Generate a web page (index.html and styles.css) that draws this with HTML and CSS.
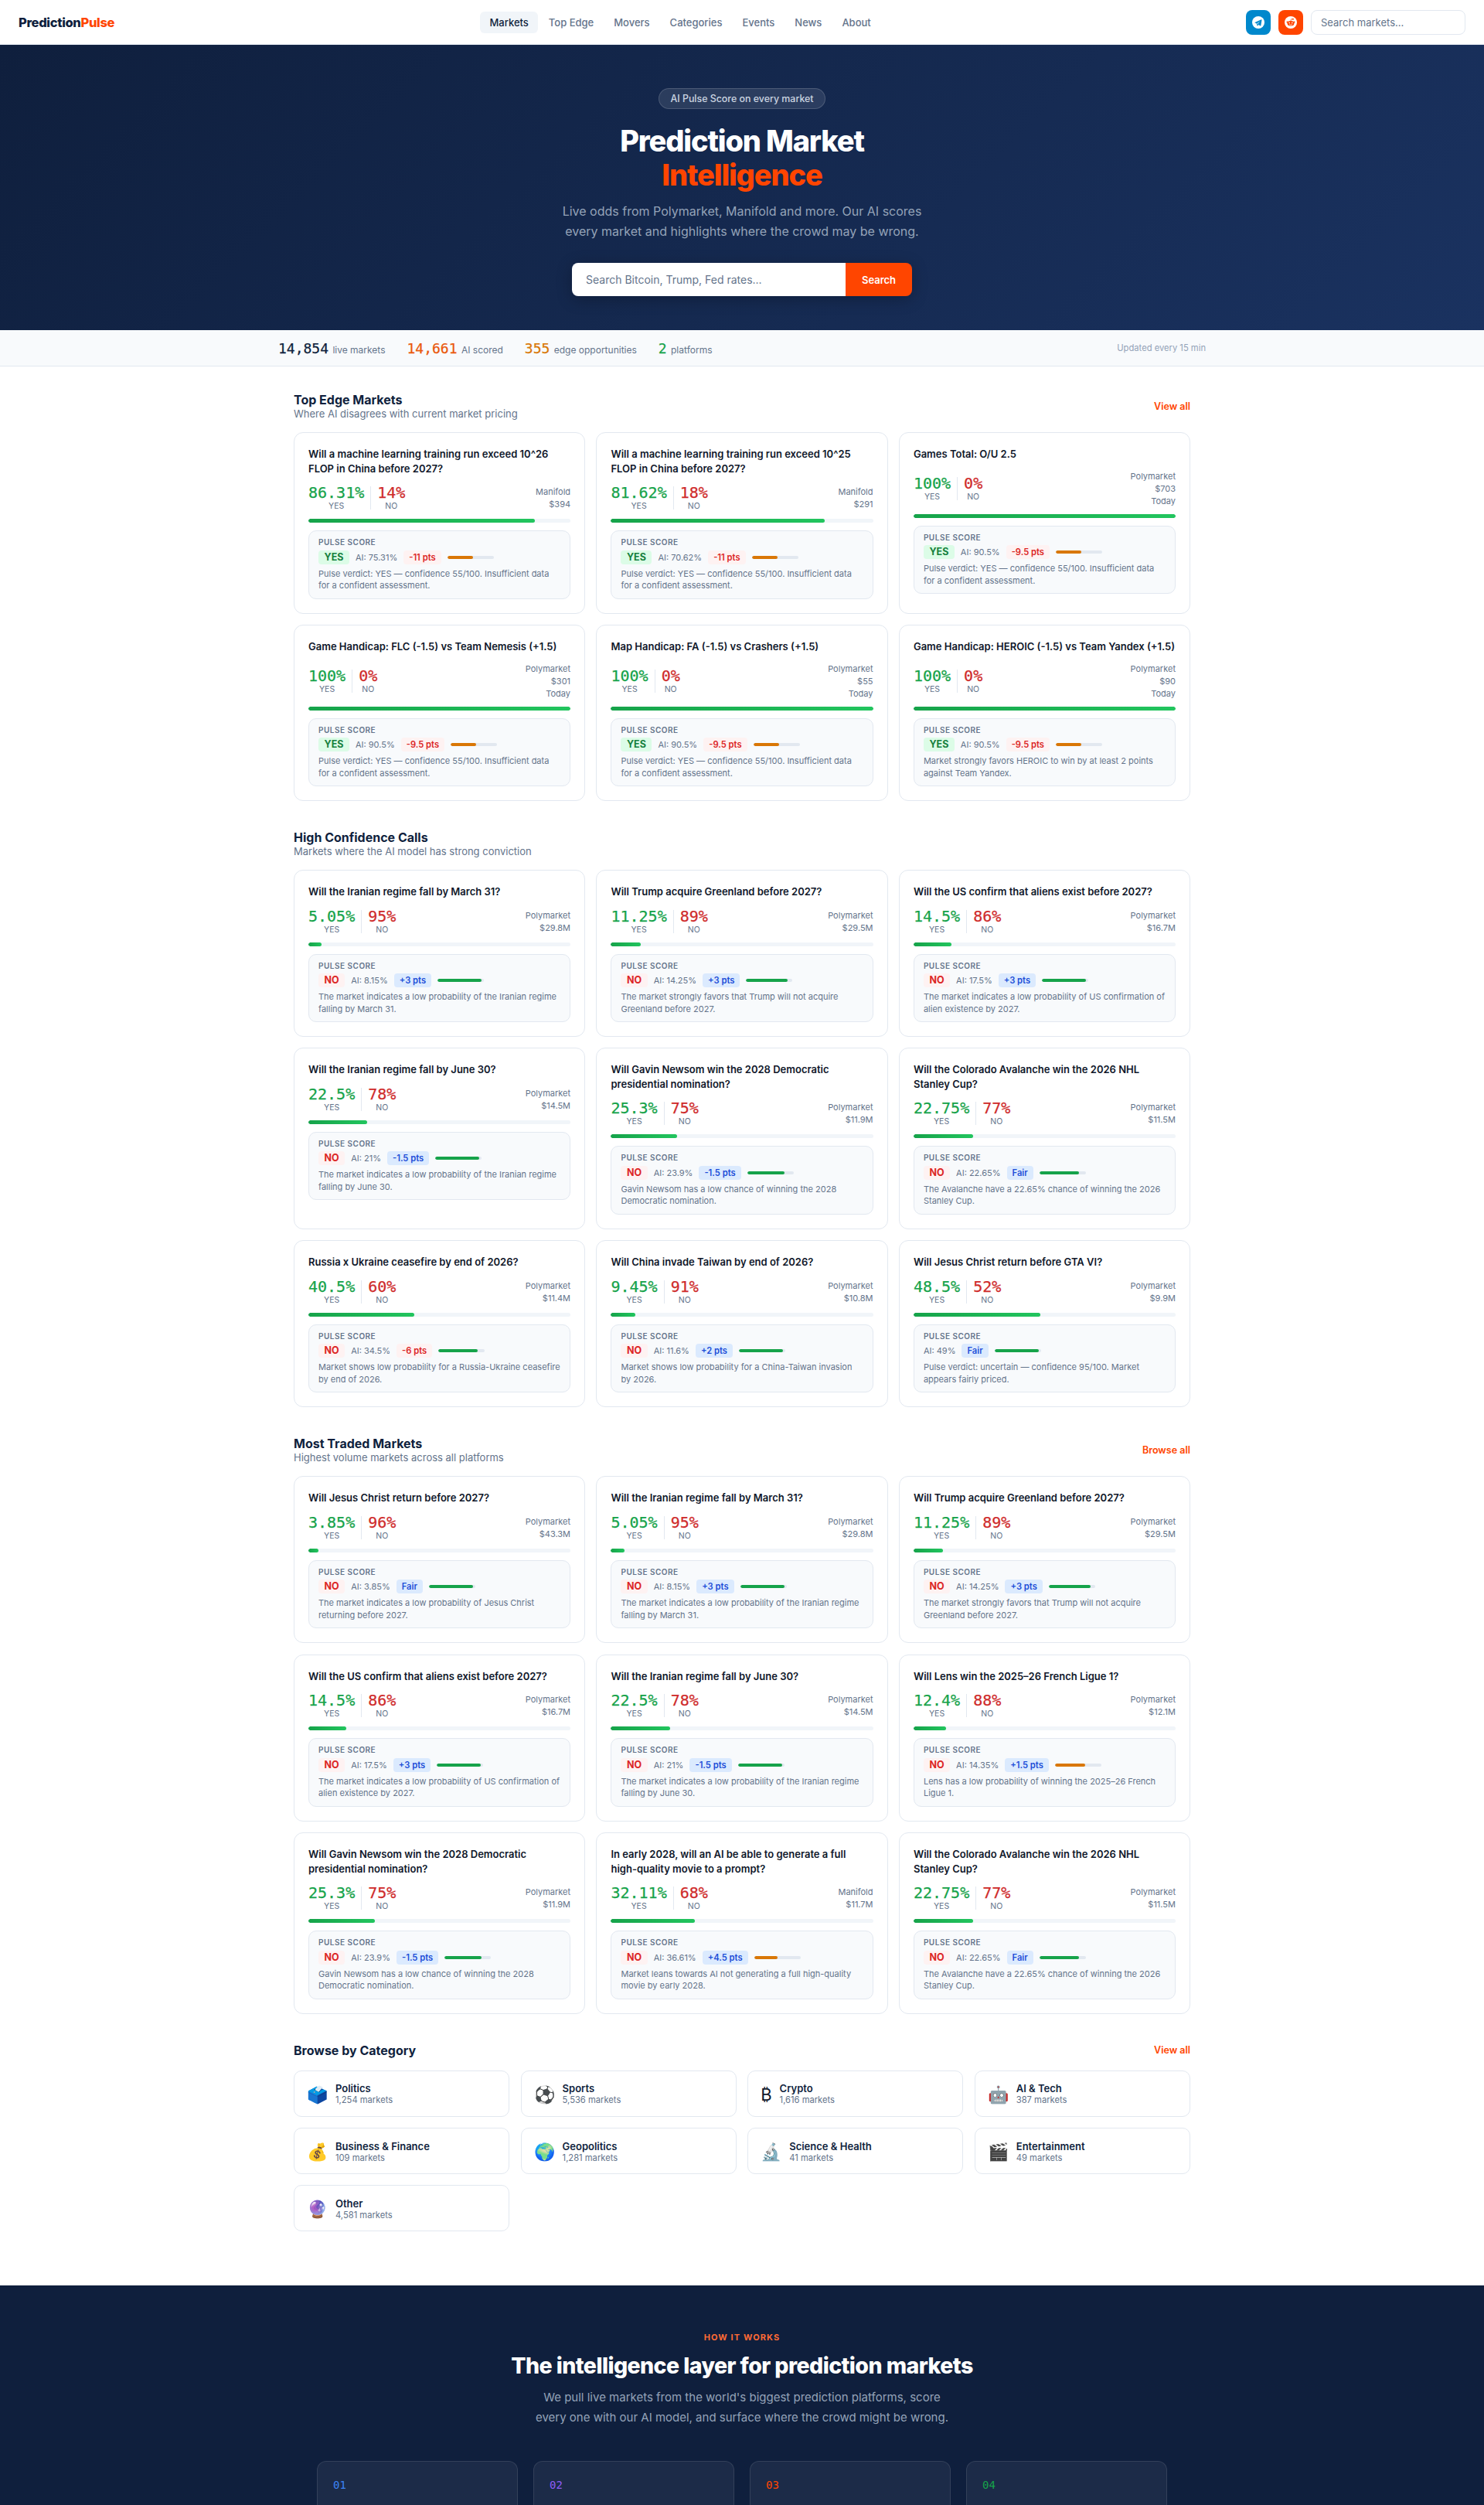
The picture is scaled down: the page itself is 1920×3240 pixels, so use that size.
FILE: index.html
```html
<!DOCTYPE html>
<html lang="en">
<head>
    <meta charset="UTF-8">
    <meta name="viewport" content="width=device-width, initial-scale=1.0">
    <title>PredictionPulse - Prediction Market Intelligence</title>
    <link rel="stylesheet" href="styles.css">
</head>
<body>
    <nav class="navbar">
        <a class="logo" href="#">Prediction<span>Pulse</span></a>
        <div class="nav-links">
            <a class="active" href="#">Markets</a>
            <a href="#">Top Edge</a>
            <a href="#">Movers</a>
            <a href="#">Categories</a>
            <a href="#">Events</a>
            <a href="#">News</a>
            <a href="#">About</a>
        </div>
        <div class="nav-right">
            <a class="social telegram" href="#" aria-label="Telegram">
                <svg viewBox="0 0 16 16" width="16" height="16"><circle cx="8" cy="8" r="8" fill="#fff"/><path d="M11.9 4.2 3.6 7.9c-.3.1-.3.5 0 .6l2 .7 1 3c.1.3.4.3.6.1l1.3-1.3 2.1 1.5c.3.2.6 0 .7-.3l1.2-7.4c.1-.4-.3-.8-.6-.6zM6.5 9.2l3.9-2.9-2.9 3.3-.3 1.6z" fill="#0088cc"/></svg>
            </a>
            <a class="social reddit" href="#" aria-label="Reddit">
                <svg viewBox="0 0 16 16" width="16" height="16"><circle cx="8" cy="8" r="8" fill="#fff"/><ellipse cx="8" cy="9.2" rx="4.4" ry="3.2" fill="#ff4500"/><circle cx="3.6" cy="7.6" r="1.1" fill="#ff4500"/><circle cx="12.4" cy="7.6" r="1.1" fill="#ff4500"/><circle cx="10.9" cy="3.7" r="1" fill="#ff4500"/><path d="M8 6 8.6 3.6l2.2.2" stroke="#ff4500" stroke-width=".7" fill="none"/><circle cx="6.2" cy="8.6" r=".8" fill="#fff"/><circle cx="9.8" cy="8.6" r=".8" fill="#fff"/><path d="M6 10.6c1.2.9 2.8.9 4 0" stroke="#fff" stroke-width=".7" fill="none"/></svg>
            </a>
            <input class="nav-search" type="text" placeholder="Search markets...">
        </div>
    </nav>

    <header class="hero">
        <div class="hero-badge">AI Pulse Score on every market</div>
        <h1>Prediction Market<br><span>Intelligence</span></h1>
        <p>Live odds from Polymarket, Manifold and more. Our AI scores every market and highlights where the crowd may be wrong.</p>
        <form class="hero-search">
            <input type="text" placeholder="Search Bitcoin, Trump, Fed rates...">
            <button type="button">Search</button>
        </form>
    </header>

    <div class="stats-bar">
        <div class="stats-inner">
            <div class="stat"><strong>14,854</strong> live markets</div>
            <div class="stat"><strong class="orange">14,661</strong> AI scored</div>
            <div class="stat"><strong class="amber">355</strong> edge opportunities</div>
            <div class="stat"><strong class="green">2</strong> platforms</div>
            <div class="stats-updated">Updated every 15 min</div>
        </div>
    </div>

    <main class="container">
        <section class="section">
            <div class="section-head">
                <div>
                    <h2>Top Edge Markets</h2>
                    <p>Where AI disagrees with current market pricing</p>
                </div>
                <a href="#">View all</a>
            </div>
            <div class="card-grid">
                <article class="card">
                    <h3>Will a machine learning training run exceed 10^26 FLOP in China before 2027?</h3>
                    <div class="card-top">
                        <div class="odds">
                            <div class="odd yes"><b>86.31%</b><span>YES</span></div>
                            <i></i>
                            <div class="odd no"><b>14%</b><span>NO</span></div>
                        </div>
                        <div class="meta">Manifold<br>$394</div>
                    </div>
                    <div class="bar"><div style="width: 86.31%"></div></div>
                    <div class="pulse">
                        <div class="pulse-label">Pulse Score</div>
                        <div class="pulse-row">
                            <span class="verdict v-yes">YES</span><span class="ai">AI: 75.31%</span><span class="edge e-red">-11 pts</span>
                            <div class="conf"><div class="c-amber" style="width: 55%"></div></div>
                        </div>
                        <p>Pulse verdict: YES — confidence 55/100. Insufficient data for a confident assessment.</p>
                    </div>
                </article>
                <article class="card">
                    <h3>Will a machine learning training run exceed 10^25 FLOP in China before 2027?</h3>
                    <div class="card-top">
                        <div class="odds">
                            <div class="odd yes"><b>81.62%</b><span>YES</span></div>
                            <i></i>
                            <div class="odd no"><b>18%</b><span>NO</span></div>
                        </div>
                        <div class="meta">Manifold<br>$291</div>
                    </div>
                    <div class="bar"><div style="width: 81.62%"></div></div>
                    <div class="pulse">
                        <div class="pulse-label">Pulse Score</div>
                        <div class="pulse-row">
                            <span class="verdict v-yes">YES</span><span class="ai">AI: 70.62%</span><span class="edge e-red">-11 pts</span>
                            <div class="conf"><div class="c-amber" style="width: 55%"></div></div>
                        </div>
                        <p>Pulse verdict: YES — confidence 55/100. Insufficient data for a confident assessment.</p>
                    </div>
                </article>
                <article class="card">
                    <h3>Games Total: O/U 2.5</h3>
                    <div class="card-top">
                        <div class="odds">
                            <div class="odd yes"><b>100%</b><span>YES</span></div>
                            <i></i>
                            <div class="odd no"><b>0%</b><span>NO</span></div>
                        </div>
                        <div class="meta">Polymarket<br>$703<br>Today</div>
                    </div>
                    <div class="bar"><div style="width: 100%"></div></div>
                    <div class="pulse">
                        <div class="pulse-label">Pulse Score</div>
                        <div class="pulse-row">
                            <span class="verdict v-yes">YES</span><span class="ai">AI: 90.5%</span><span class="edge e-red">-9.5 pts</span>
                            <div class="conf"><div class="c-amber" style="width: 55%"></div></div>
                        </div>
                        <p>Pulse verdict: YES — confidence 55/100. Insufficient data for a confident assessment.</p>
                    </div>
                </article>
                <article class="card">
                    <h3>Game Handicap: FLC (-1.5) vs Team Nemesis (+1.5)</h3>
                    <div class="card-top">
                        <div class="odds">
                            <div class="odd yes"><b>100%</b><span>YES</span></div>
                            <i></i>
                            <div class="odd no"><b>0%</b><span>NO</span></div>
                        </div>
                        <div class="meta">Polymarket<br>$301<br>Today</div>
                    </div>
                    <div class="bar"><div style="width: 100%"></div></div>
                    <div class="pulse">
                        <div class="pulse-label">Pulse Score</div>
                        <div class="pulse-row">
                            <span class="verdict v-yes">YES</span><span class="ai">AI: 90.5%</span><span class="edge e-red">-9.5 pts</span>
                            <div class="conf"><div class="c-amber" style="width: 55%"></div></div>
                        </div>
                        <p>Pulse verdict: YES — confidence 55/100. Insufficient data for a confident assessment.</p>
                    </div>
                </article>
                <article class="card">
                    <h3>Map Handicap: FA (-1.5) vs Crashers (+1.5)</h3>
                    <div class="card-top">
                        <div class="odds">
                            <div class="odd yes"><b>100%</b><span>YES</span></div>
                            <i></i>
                            <div class="odd no"><b>0%</b><span>NO</span></div>
                        </div>
                        <div class="meta">Polymarket<br>$55<br>Today</div>
                    </div>
                    <div class="bar"><div style="width: 100%"></div></div>
                    <div class="pulse">
                        <div class="pulse-label">Pulse Score</div>
                        <div class="pulse-row">
                            <span class="verdict v-yes">YES</span><span class="ai">AI: 90.5%</span><span class="edge e-red">-9.5 pts</span>
                            <div class="conf"><div class="c-amber" style="width: 55%"></div></div>
                        </div>
                        <p>Pulse verdict: YES — confidence 55/100. Insufficient data for a confident assessment.</p>
                    </div>
                </article>
                <article class="card">
                    <h3>Game Handicap: HEROIC (-1.5) vs Team Yandex (+1.5)</h3>
                    <div class="card-top">
                        <div class="odds">
                            <div class="odd yes"><b>100%</b><span>YES</span></div>
                            <i></i>
                            <div class="odd no"><b>0%</b><span>NO</span></div>
                        </div>
                        <div class="meta">Polymarket<br>$90<br>Today</div>
                    </div>
                    <div class="bar"><div style="width: 100%"></div></div>
                    <div class="pulse">
                        <div class="pulse-label">Pulse Score</div>
                        <div class="pulse-row">
                            <span class="verdict v-yes">YES</span><span class="ai">AI: 90.5%</span><span class="edge e-red">-9.5 pts</span>
                            <div class="conf"><div class="c-amber" style="width: 55%"></div></div>
                        </div>
                        <p>Market strongly favors HEROIC to win by at least 2 points against Team Yandex.</p>
                    </div>
                </article>
            </div>
        </section>

        <section class="section">
            <div class="section-head">
                <div>
                    <h2>High Confidence Calls</h2>
                    <p>Markets where the AI model has strong conviction</p>
                </div>
            </div>
            <div class="card-grid">
                <article class="card">
                    <h3>Will the Iranian regime fall by March 31?</h3>
                    <div class="card-top">
                        <div class="odds">
                            <div class="odd yes"><b>5.05%</b><span>YES</span></div>
                            <i></i>
                            <div class="odd no"><b>95%</b><span>NO</span></div>
                        </div>
                        <div class="meta">Polymarket<br>$29.8M</div>
                    </div>
                    <div class="bar"><div style="width: 5.05%"></div></div>
                    <div class="pulse">
                        <div class="pulse-label">Pulse Score</div>
                        <div class="pulse-row">
                            <span class="verdict v-no">NO</span><span class="ai">AI: 8.15%</span><span class="edge e-blue">+3 pts</span>
                            <div class="conf"><div class="c-green" style="width: 95%"></div></div>
                        </div>
                        <p>The market indicates a low probability of the Iranian regime falling by March 31.</p>
                    </div>
                </article>
                <article class="card">
                    <h3>Will Trump acquire Greenland before 2027?</h3>
                    <div class="card-top">
                        <div class="odds">
                            <div class="odd yes"><b>11.25%</b><span>YES</span></div>
                            <i></i>
                            <div class="odd no"><b>89%</b><span>NO</span></div>
                        </div>
                        <div class="meta">Polymarket<br>$29.5M</div>
                    </div>
                    <div class="bar"><div style="width: 11.25%"></div></div>
                    <div class="pulse">
                        <div class="pulse-label">Pulse Score</div>
                        <div class="pulse-row">
                            <span class="verdict v-no">NO</span><span class="ai">AI: 14.25%</span><span class="edge e-blue">+3 pts</span>
                            <div class="conf"><div class="c-green" style="width: 90%"></div></div>
                        </div>
                        <p>The market strongly favors that Trump will not acquire Greenland before 2027.</p>
                    </div>
                </article>
                <article class="card">
                    <h3>Will the US confirm that aliens exist before 2027?</h3>
                    <div class="card-top">
                        <div class="odds">
                            <div class="odd yes"><b>14.5%</b><span>YES</span></div>
                            <i></i>
                            <div class="odd no"><b>86%</b><span>NO</span></div>
                        </div>
                        <div class="meta">Polymarket<br>$16.7M</div>
                    </div>
                    <div class="bar"><div style="width: 14.5%"></div></div>
                    <div class="pulse">
                        <div class="pulse-label">Pulse Score</div>
                        <div class="pulse-row">
                            <span class="verdict v-no">NO</span><span class="ai">AI: 17.5%</span><span class="edge e-blue">+3 pts</span>
                            <div class="conf"><div class="c-green" style="width: 95%"></div></div>
                        </div>
                        <p>The market indicates a low probability of US confirmation of alien existence by 2027.</p>
                    </div>
                </article>
                <article class="card">
                    <h3>Will the Iranian regime fall by June 30?</h3>
                    <div class="card-top">
                        <div class="odds">
                            <div class="odd yes"><b>22.5%</b><span>YES</span></div>
                            <i></i>
                            <div class="odd no"><b>78%</b><span>NO</span></div>
                        </div>
                        <div class="meta">Polymarket<br>$14.5M</div>
                    </div>
                    <div class="bar"><div style="width: 22.5%"></div></div>
                    <div class="pulse">
                        <div class="pulse-label">Pulse Score</div>
                        <div class="pulse-row">
                            <span class="verdict v-no">NO</span><span class="ai">AI: 21%</span><span class="edge e-blue">-1.5 pts</span>
                            <div class="conf"><div class="c-green" style="width: 95%"></div></div>
                        </div>
                        <p>The market indicates a low probability of the Iranian regime falling by June 30.</p>
                    </div>
                </article>
                <article class="card">
                    <h3>Will Gavin Newsom win the 2028 Democratic presidential nomination?</h3>
                    <div class="card-top">
                        <div class="odds">
                            <div class="odd yes"><b>25.3%</b><span>YES</span></div>
                            <i></i>
                            <div class="odd no"><b>75%</b><span>NO</span></div>
                        </div>
                        <div class="meta">Polymarket<br>$11.9M</div>
                    </div>
                    <div class="bar"><div style="width: 25.3%"></div></div>
                    <div class="pulse">
                        <div class="pulse-label">Pulse Score</div>
                        <div class="pulse-row">
                            <span class="verdict v-no">NO</span><span class="ai">AI: 23.9%</span><span class="edge e-blue">-1.5 pts</span>
                            <div class="conf"><div class="c-green" style="width: 80%"></div></div>
                        </div>
                        <p>Gavin Newsom has a low chance of winning the 2028 Democratic nomination.</p>
                    </div>
                </article>
                <article class="card">
                    <h3>Will the Colorado Avalanche win the 2026 NHL Stanley Cup?</h3>
                    <div class="card-top">
                        <div class="odds">
                            <div class="odd yes"><b>22.75%</b><span>YES</span></div>
                            <i></i>
                            <div class="odd no"><b>77%</b><span>NO</span></div>
                        </div>
                        <div class="meta">Polymarket<br>$11.5M</div>
                    </div>
                    <div class="bar"><div style="width: 22.75%"></div></div>
                    <div class="pulse">
                        <div class="pulse-label">Pulse Score</div>
                        <div class="pulse-row">
                            <span class="verdict v-no">NO</span><span class="ai">AI: 22.65%</span><span class="edge e-blue">Fair</span>
                            <div class="conf"><div class="c-green" style="width: 85%"></div></div>
                        </div>
                        <p>The Avalanche have a 22.65% chance of winning the 2026 Stanley Cup.</p>
                    </div>
                </article>
                <article class="card">
                    <h3>Russia x Ukraine ceasefire by end of 2026?</h3>
                    <div class="card-top">
                        <div class="odds">
                            <div class="odd yes"><b>40.5%</b><span>YES</span></div>
                            <i></i>
                            <div class="odd no"><b>60%</b><span>NO</span></div>
                        </div>
                        <div class="meta">Polymarket<br>$11.4M</div>
                    </div>
                    <div class="bar"><div style="width: 40.5%"></div></div>
                    <div class="pulse">
                        <div class="pulse-label">Pulse Score</div>
                        <div class="pulse-row">
                            <span class="verdict v-no">NO</span><span class="ai">AI: 34.5%</span><span class="edge e-red">-6 pts</span>
                            <div class="conf"><div class="c-green" style="width: 85%"></div></div>
                        </div>
                        <p>Market shows low probability for a Russia-Ukraine ceasefire by end of 2026.</p>
                    </div>
                </article>
                <article class="card">
                    <h3>Will China invade Taiwan by end of 2026?</h3>
                    <div class="card-top">
                        <div class="odds">
                            <div class="odd yes"><b>9.45%</b><span>YES</span></div>
                            <i></i>
                            <div class="odd no"><b>91%</b><span>NO</span></div>
                        </div>
                        <div class="meta">Polymarket<br>$10.8M</div>
                    </div>
                    <div class="bar"><div style="width: 9.45%"></div></div>
                    <div class="pulse">
                        <div class="pulse-label">Pulse Score</div>
                        <div class="pulse-row">
                            <span class="verdict v-no">NO</span><span class="ai">AI: 11.6%</span><span class="edge e-blue">+2 pts</span>
                            <div class="conf"><div class="c-green" style="width: 95%"></div></div>
                        </div>
                        <p>Market shows low probability for a China-Taiwan invasion by 2026.</p>
                    </div>
                </article>
                <article class="card">
                    <h3>Will Jesus Christ return before GTA VI?</h3>
                    <div class="card-top">
                        <div class="odds">
                            <div class="odd yes"><b>48.5%</b><span>YES</span></div>
                            <i></i>
                            <div class="odd no"><b>52%</b><span>NO</span></div>
                        </div>
                        <div class="meta">Polymarket<br>$9.9M</div>
                    </div>
                    <div class="bar"><div style="width: 48.5%"></div></div>
                    <div class="pulse">
                        <div class="pulse-label">Pulse Score</div>
                        <div class="pulse-row">
                            <span class="ai">AI: 49%</span><span class="edge e-blue">Fair</span>
                            <div class="conf"><div class="c-green" style="width: 95%"></div></div>
                        </div>
                        <p>Pulse verdict: uncertain — confidence 95/100. Market appears fairly priced.</p>
                    </div>
                </article>
            </div>
        </section>

        <section class="section">
            <div class="section-head">
                <div>
                    <h2>Most Traded Markets</h2>
                    <p>Highest volume markets across all platforms</p>
                </div>
                <a href="#">Browse all</a>
            </div>
            <div class="card-grid">
                <article class="card">
                    <h3>Will Jesus Christ return before 2027?</h3>
                    <div class="card-top">
                        <div class="odds">
                            <div class="odd yes"><b>3.85%</b><span>YES</span></div>
                            <i></i>
                            <div class="odd no"><b>96%</b><span>NO</span></div>
                        </div>
                        <div class="meta">Polymarket<br>$43.3M</div>
                    </div>
                    <div class="bar"><div style="width: 3.85%"></div></div>
                    <div class="pulse">
                        <div class="pulse-label">Pulse Score</div>
                        <div class="pulse-row">
                            <span class="verdict v-no">NO</span><span class="ai">AI: 3.85%</span><span class="edge e-blue">Fair</span>
                            <div class="conf"><div class="c-green" style="width: 95%"></div></div>
                        </div>
                        <p>The market indicates a low probability of Jesus Christ returning before 2027.</p>
                    </div>
                </article>
                <article class="card">
                    <h3>Will the Iranian regime fall by March 31?</h3>
                    <div class="card-top">
                        <div class="odds">
                            <div class="odd yes"><b>5.05%</b><span>YES</span></div>
                            <i></i>
                            <div class="odd no"><b>95%</b><span>NO</span></div>
                        </div>
                        <div class="meta">Polymarket<br>$29.8M</div>
                    </div>
                    <div class="bar"><div style="width: 5.05%"></div></div>
                    <div class="pulse">
                        <div class="pulse-label">Pulse Score</div>
                        <div class="pulse-row">
                            <span class="verdict v-no">NO</span><span class="ai">AI: 8.15%</span><span class="edge e-blue">+3 pts</span>
                            <div class="conf"><div class="c-green" style="width: 95%"></div></div>
                        </div>
                        <p>The market indicates a low probability of the Iranian regime falling by March 31.</p>
                    </div>
                </article>
                <article class="card">
                    <h3>Will Trump acquire Greenland before 2027?</h3>
                    <div class="card-top">
                        <div class="odds">
                            <div class="odd yes"><b>11.25%</b><span>YES</span></div>
                            <i></i>
                            <div class="odd no"><b>89%</b><span>NO</span></div>
                        </div>
                        <div class="meta">Polymarket<br>$29.5M</div>
                    </div>
                    <div class="bar"><div style="width: 11.25%"></div></div>
                    <div class="pulse">
                        <div class="pulse-label">Pulse Score</div>
                        <div class="pulse-row">
                            <span class="verdict v-no">NO</span><span class="ai">AI: 14.25%</span><span class="edge e-blue">+3 pts</span>
                            <div class="conf"><div class="c-green" style="width: 90%"></div></div>
                        </div>
                        <p>The market strongly favors that Trump will not acquire Greenland before 2027.</p>
                    </div>
                </article>
                <article class="card">
                    <h3>Will the US confirm that aliens exist before 2027?</h3>
                    <div class="card-top">
                        <div class="odds">
                            <div class="odd yes"><b>14.5%</b><span>YES</span></div>
                            <i></i>
                            <div class="odd no"><b>86%</b><span>NO</span></div>
                        </div>
                        <div class="meta">Polymarket<br>$16.7M</div>
                    </div>
                    <div class="bar"><div style="width: 14.5%"></div></div>
                    <div class="pulse">
                        <div class="pulse-label">Pulse Score</div>
                        <div class="pulse-row">
                            <span class="verdict v-no">NO</span><span class="ai">AI: 17.5%</span><span class="edge e-blue">+3 pts</span>
                            <div class="conf"><div class="c-green" style="width: 95%"></div></div>
                        </div>
                        <p>The market indicates a low probability of US confirmation of alien existence by 2027.</p>
                    </div>
                </article>
                <article class="card">
                    <h3>Will the Iranian regime fall by June 30?</h3>
                    <div class="card-top">
                        <div class="odds">
                            <div class="odd yes"><b>22.5%</b><span>YES</span></div>
                            <i></i>
                            <div class="odd no"><b>78%</b><span>NO</span></div>
                        </div>
                        <div class="meta">Polymarket<br>$14.5M</div>
                    </div>
                    <div class="bar"><div style="width: 22.5%"></div></div>
                    <div class="pulse">
                        <div class="pulse-label">Pulse Score</div>
                        <div class="pulse-row">
                            <span class="verdict v-no">NO</span><span class="ai">AI: 21%</span><span class="edge e-blue">-1.5 pts</span>
                            <div class="conf"><div class="c-green" style="width: 95%"></div></div>
                        </div>
                        <p>The market indicates a low probability of the Iranian regime falling by June 30.</p>
                    </div>
                </article>
                <article class="card">
                    <h3>Will Lens win the 2025–26 French Ligue 1?</h3>
                    <div class="card-top">
                        <div class="odds">
                            <div class="odd yes"><b>12.4%</b><span>YES</span></div>
                            <i></i>
                            <div class="odd no"><b>88%</b><span>NO</span></div>
                        </div>
                        <div class="meta">Polymarket<br>$12.1M</div>
                    </div>
                    <div class="bar"><div style="width: 12.4%"></div></div>
                    <div class="pulse">
                        <div class="pulse-label">Pulse Score</div>
                        <div class="pulse-row">
                            <span class="verdict v-no">NO</span><span class="ai">AI: 14.35%</span><span class="edge e-blue">+1.5 pts</span>
                            <div class="conf"><div class="c-amber" style="width: 65%"></div></div>
                        </div>
                        <p>Lens has a low probability of winning the 2025–26 French Ligue 1.</p>
                    </div>
                </article>
                <article class="card">
                    <h3>Will Gavin Newsom win the 2028 Democratic presidential nomination?</h3>
                    <div class="card-top">
                        <div class="odds">
                            <div class="odd yes"><b>25.3%</b><span>YES</span></div>
                            <i></i>
                            <div class="odd no"><b>75%</b><span>NO</span></div>
                        </div>
                        <div class="meta">Polymarket<br>$11.9M</div>
                    </div>
                    <div class="bar"><div style="width: 25.3%"></div></div>
                    <div class="pulse">
                        <div class="pulse-label">Pulse Score</div>
                        <div class="pulse-row">
                            <span class="verdict v-no">NO</span><span class="ai">AI: 23.9%</span><span class="edge e-blue">-1.5 pts</span>
                            <div class="conf"><div class="c-green" style="width: 80%"></div></div>
                        </div>
                        <p>Gavin Newsom has a low chance of winning the 2028 Democratic nomination.</p>
                    </div>
                </article>
                <article class="card">
                    <h3>In early 2028, will an AI be able to generate a full high-quality movie to a prompt?</h3>
                    <div class="card-top">
                        <div class="odds">
                            <div class="odd yes"><b>32.11%</b><span>YES</span></div>
                            <i></i>
                            <div class="odd no"><b>68%</b><span>NO</span></div>
                        </div>
                        <div class="meta">Manifold<br>$11.7M</div>
                    </div>
                    <div class="bar"><div style="width: 32.11%"></div></div>
                    <div class="pulse">
                        <div class="pulse-label">Pulse Score</div>
                        <div class="pulse-row">
                            <span class="verdict v-no">NO</span><span class="ai">AI: 36.61%</span><span class="edge e-blue">+4.5 pts</span>
                            <div class="conf"><div class="c-amber" style="width: 50%"></div></div>
                        </div>
                        <p>Market leans towards AI not generating a full high-quality movie by early 2028.</p>
                    </div>
                </article>
                <article class="card">
                    <h3>Will the Colorado Avalanche win the 2026 NHL Stanley Cup?</h3>
                    <div class="card-top">
                        <div class="odds">
                            <div class="odd yes"><b>22.75%</b><span>YES</span></div>
                            <i></i>
                            <div class="odd no"><b>77%</b><span>NO</span></div>
                        </div>
                        <div class="meta">Polymarket<br>$11.5M</div>
                    </div>
                    <div class="bar"><div style="width: 22.75%"></div></div>
                    <div class="pulse">
                        <div class="pulse-label">Pulse Score</div>
                        <div class="pulse-row">
                            <span class="verdict v-no">NO</span><span class="ai">AI: 22.65%</span><span class="edge e-blue">Fair</span>
                            <div class="conf"><div class="c-green" style="width: 85%"></div></div>
                        </div>
                        <p>The Avalanche have a 22.65% chance of winning the 2026 Stanley Cup.</p>
                    </div>
                </article>
            </div>
        </section>

        <section class="section">
            <div class="section-head">
                <div>
                    <h2>Browse by Category</h2>
                </div>
                <a href="#">View all</a>
            </div>
            <div class="cat-grid">
                <a class="cat" href="#"><span class="cat-icon">🗳️</span><div><h4>Politics</h4><small>1,254 markets</small></div></a>
                <a class="cat" href="#"><span class="cat-icon">⚽</span><div><h4>Sports</h4><small>5,536 markets</small></div></a>
                <a class="cat" href="#"><span class="cat-icon">₿</span><div><h4>Crypto</h4><small>1,616 markets</small></div></a>
                <a class="cat" href="#"><span class="cat-icon">🤖</span><div><h4>AI &amp; Tech</h4><small>387 markets</small></div></a>
                <a class="cat" href="#"><span class="cat-icon">💰</span><div><h4>Business &amp; Finance</h4><small>109 markets</small></div></a>
                <a class="cat" href="#"><span class="cat-icon">🌍</span><div><h4>Geopolitics</h4><small>1,281 markets</small></div></a>
                <a class="cat" href="#"><span class="cat-icon">🔬</span><div><h4>Science &amp; Health</h4><small>41 markets</small></div></a>
                <a class="cat" href="#"><span class="cat-icon">🎬</span><div><h4>Entertainment</h4><small>49 markets</small></div></a>
                <a class="cat" href="#"><span class="cat-icon">🔮</span><div><h4>Other</h4><small>4,581 markets</small></div></a>
            </div>
        </section>
    </main>

    <section class="how">
        <div class="how-eyebrow">How it works</div>
        <h2>The intelligence layer for prediction markets</h2>
        <p class="how-sub">We pull live markets from the world's biggest prediction platforms, score every one with our AI model, and surface where the crowd might be wrong.</p>
        <div class="how-steps">
            <div class="step"><span class="n1">01</span><h4>Aggregate</h4><p>Live markets from every major platform in one place.</p></div>
            <div class="step"><span class="n2">02</span><h4>Analyze</h4><p>Our AI model gives each market its own probability.</p></div>
            <div class="step"><span class="n3">03</span><h4>Find the edge</h4><p>We compare the AI score with the market price.</p></div>
            <div class="step"><span class="n4">04</span><h4>Act on it</h4><p>See where the crowd may be wrong and decide.</p></div>
        </div>
    </section>
</body>
</html>
```

FILE: styles.css
```css
* {
    margin: 0;
    padding: 0;
    box-sizing: border-box;
}

body {
    font-family: Inter, 'Noto Sans', sans-serif;
    background: #fff;
    color: #0f172a;
}

a {
    text-decoration: none;
    color: inherit;
}

.navbar {
    display: flex;
    align-items: center;
    justify-content: space-between;
    height: 58px;
    padding: 0 24px;
    background: #fff;
    border-bottom: 1px solid #e2e8f0;
}

.logo {
    font-size: 16.5px;
    font-weight: 800;
    letter-spacing: -0.02em;
    color: #0f1f3d;
}

.logo span {
    color: #ff4500;
}

.nav-links {
    display: flex;
    gap: 2px;
}

.nav-links a {
    padding: 6px 12px;
    border-radius: 6px;
    font-size: 13px;
    line-height: 16px;
    font-weight: 500;
    color: #64748b;
}

.nav-links a.active {
    background: #f1f5f9;
    color: #0f1f3d;
}

.nav-right {
    display: flex;
    align-items: center;
    gap: 10px;
}

.social {
    display: flex;
    align-items: center;
    justify-content: center;
    width: 32px;
    height: 32px;
    border-radius: 8px;
}

.telegram {
    background: #0088cc;
}

.reddit {
    background: #ff4500;
}

.nav-search {
    width: 200px;
    height: 32px;
    padding: 0 12px;
    border: 1px solid #e2e8f0;
    border-radius: 8px;
    font: 13px Inter, sans-serif;
}

.nav-search::placeholder {
    color: #64748b;
}

.hero {
    padding: 56px 20px 44px;
    text-align: center;
    background: linear-gradient(135deg, #0f1f3d 0%, #1a3260 100%);
    color: #fff;
}

.hero-badge {
    display: inline-block;
    height: 27px;
    padding: 0 14px;
    margin-bottom: 20px;
    border: 1px solid rgba(255,255,255,0.15);
    border-radius: 20px;
    background: rgba(255,255,255,0.1);
    font-size: 12.4px;
    line-height: 25px;
    font-weight: 500;
    color: #cbd5e1;
}

.hero h1 {
    font-size: 38px;
    line-height: 43.5px;
    font-weight: 800;
    letter-spacing: -0.03em;
    margin-bottom: 13px;
}

.hero h1 span {
    color: #ff4500;
}

.hero p {
    max-width: 500px;
    margin: 0 auto 28px;
    font-size: 16px;
    line-height: 25.6px;
    color: #94a3b8;
}

.hero-search {
    display: flex;
    width: 440px;
    height: 43px;
    margin: 0 auto;
    border-radius: 8px;
    overflow: hidden;
    box-shadow: 0 4px 20px rgba(0,0,0,0.25);
}

.hero-search input {
    flex: 1;
    min-width: 0;
    padding: 0 18px;
    border: none;
    font: 14px Inter, sans-serif;
}

.hero-search input::placeholder {
    color: #64748b;
}

.hero-search button {
    width: 86px;
    border: none;
    background: #ff4500;
    color: #fff;
    font: 600 13px Inter, sans-serif;
}

.stats-bar {
    height: 47px;
    background: #f8fafc;
    border-bottom: 1px solid #e2e8f0;
}

.stats-inner {
    display: flex;
    align-items: center;
    gap: 28px;
    max-width: 1200px;
    height: 100%;
    margin: 0 auto;
}

.stat {
    font-size: 12px;
    color: #64748b;
}

.stat strong {
    margin-right: 2px;
    font-family: 'DejaVu Sans Mono', monospace;
    font-size: 18px;
    font-weight: 500;
    -webkit-text-stroke: 0.25px currentColor;
    color: #0f1f3d;
}

.stat strong.orange { color: #ea580c; }
.stat strong.amber { color: #d97706; }
.stat strong.green { color: #16a34a; }

.stats-updated {
    margin-left: auto;
    font-size: 11.2px;
    color: #94a3b8;
}

.container {
    max-width: 1200px;
    margin: 0 auto;
    padding: 33px 20px 70px;
}

.section {
    margin-bottom: 37px;
}

.section:last-child {
    margin-bottom: 0;
}

.section-head {
    display: flex;
    align-items: center;
    justify-content: space-between;
    margin-bottom: 16px;
}

.section-head h2 {
    font-size: 16px;
    line-height: 20px;
    font-weight: 700;
    color: #0f1f3d;
}

.section-head p {
    font-size: 13px;
    line-height: 16px;
    color: #64748b;
}

.section-head a {
    font-size: 12.5px;
    font-weight: 600;
    color: #ff4500;
}

.card-grid {
    display: grid;
    grid-template-columns: repeat(3, 1fr);
    gap: 14.4px;
}

.card {
    display: flex;
    flex-direction: column;
    padding: 18px;
    border: 1px solid #e2e8f0;
    border-radius: 12px;
    background: #fff;
}

.card h3 {
    font-size: 13px;
    line-height: 18.5px;
    font-weight: 600;
    color: #0f172a;
    margin-bottom: 11px;
}

.card-top {
    display: flex;
    align-items: center;
    justify-content: space-between;
    margin-bottom: 9px;
}

.odds {
    display: flex;
    align-items: center;
    gap: 8px;
}

.odds i {
    width: 1px;
    height: 30px;
    background: #e2e8f0;
}

.odd {
    text-align: center;
}

.odd b {
    display: block;
    font-family: 'DejaVu Sans Mono', monospace;
    font-size: 20px;
    line-height: 22px;
    font-weight: 500;
    -webkit-text-stroke: 0.25px currentColor;
}

.odd span {
    display: block;
    font-size: 10.5px;
    line-height: 14px;
    color: #64748b;
}

.odd.yes b { color: #16a34a; }
.odd.no b { color: #cf2b2b; }

.meta {
    text-align: right;
    font-size: 11px;
    line-height: 16px;
    color: #64748b;
}

.bar {
    height: 5px;
    margin-bottom: 10px;
    border-radius: 3px;
    background: #f1f5f9;
    overflow: hidden;
}

.bar div {
    height: 100%;
    border-radius: 3px;
    background: linear-gradient(90deg, #16a34a, #22c55e);
}

.pulse {
    padding: 8px 12px;
    border: 1px solid #e2e8f0;
    border-radius: 10px;
    background: #f8fafc;
}

.pulse-label {
    font-size: 10px;
    line-height: 13px;
    font-weight: 600;
    letter-spacing: 0.05em;
    text-transform: uppercase;
    color: #64748b;
    margin-bottom: 3.5px;
}

.pulse-row {
    display: flex;
    align-items: center;
    gap: 8px;
    height: 18px;
    margin-bottom: 5px;
}

.verdict {
    padding: 0 7.5px;
    border-radius: 4px;
    font-size: 12.5px;
    line-height: 18px;
    font-weight: 700;
}

.v-yes { background: #dcfce7; color: #15803d; }
.v-no { background: #fef2f2; color: #dc2626; }

.ai {
    font-size: 11px;
    color: #64748b;
}

.edge {
    padding: 0 7px;
    border-radius: 4px;
    font-size: 11.2px;
    line-height: 18px;
    font-weight: 600;
}

.e-red { background: #fef2f2; color: #dc2626; }
.e-blue { background: #dbeafe; color: #1d4ed8; }

.conf {
    width: 60px;
    height: 4px;
    border-radius: 2px;
    background: #e2e8f0;
    overflow: hidden;
}

.conf div {
    height: 100%;
    border-radius: 2px;
}

.c-green { background: #16a34a; }
.c-amber { background: #d97706; }

.pulse p {
    font-size: 11px;
    line-height: 15.5px;
    color: #64748b;
}

.cat-grid {
    display: grid;
    grid-template-columns: repeat(4, 1fr);
    gap: 14.4px;
}

.cat {
    display: flex;
    align-items: center;
    gap: 10px;
    height: 60px;
    padding: 2px 16px 0;
    border: 1px solid #e2e8f0;
    border-radius: 10px;
}

.cat-icon {
    font-size: 22px;
    color: #0f172a;
}

.cat h4 {
    font-size: 13px;
    line-height: 16px;
    font-weight: 600;
    color: #0f1f3d;
}

.cat small {
    display: block;
    font-size: 11.2px;
    line-height: 15px;
    color: #64748b;
}

.how {
    padding: 60px 20px 80px;
    text-align: center;
    background: #0f1f3d;
    color: #fff;
}

.how-eyebrow {
    font-size: 11px;
    line-height: 14px;
    font-weight: 700;
    letter-spacing: 0.1em;
    text-transform: uppercase;
    color: #ff6b35;
    margin-bottom: 12px;
}

.how h2 {
    font-size: 28.5px;
    line-height: 36px;
    font-weight: 800;
    letter-spacing: -0.02em;
    margin-bottom: 10px;
}

.how-sub {
    max-width: 540px;
    margin: 0 auto 43px;
    font-size: 15px;
    line-height: 26px;
    color: #94a3b8;
}

.how-steps {
    display: grid;
    grid-template-columns: repeat(4, 1fr);
    gap: 20px;
    max-width: 1100px;
    margin: 0 auto;
    text-align: left;
}

.step {
    padding: 20px;
    border: 1px solid rgba(255,255,255,0.1);
    border-radius: 12px;
    background: #1c2b48;
}

.step span {
    display: block;
    font-family: 'DejaVu Sans Mono', monospace;
    font-size: 14px;
    line-height: 20px;
    margin-bottom: 15px;
}

.n1 { color: #3b82f6; }
.n2 { color: #8b5cf6; }
.n3 { color: #ff4500; }
.n4 { color: #16a34a; }

.step h4 {
    font-size: 15px;
    line-height: 20px;
    margin-bottom: 8px;
}

.step p {
    font-size: 13px;
    line-height: 20px;
    color: #94a3b8;
}
```
